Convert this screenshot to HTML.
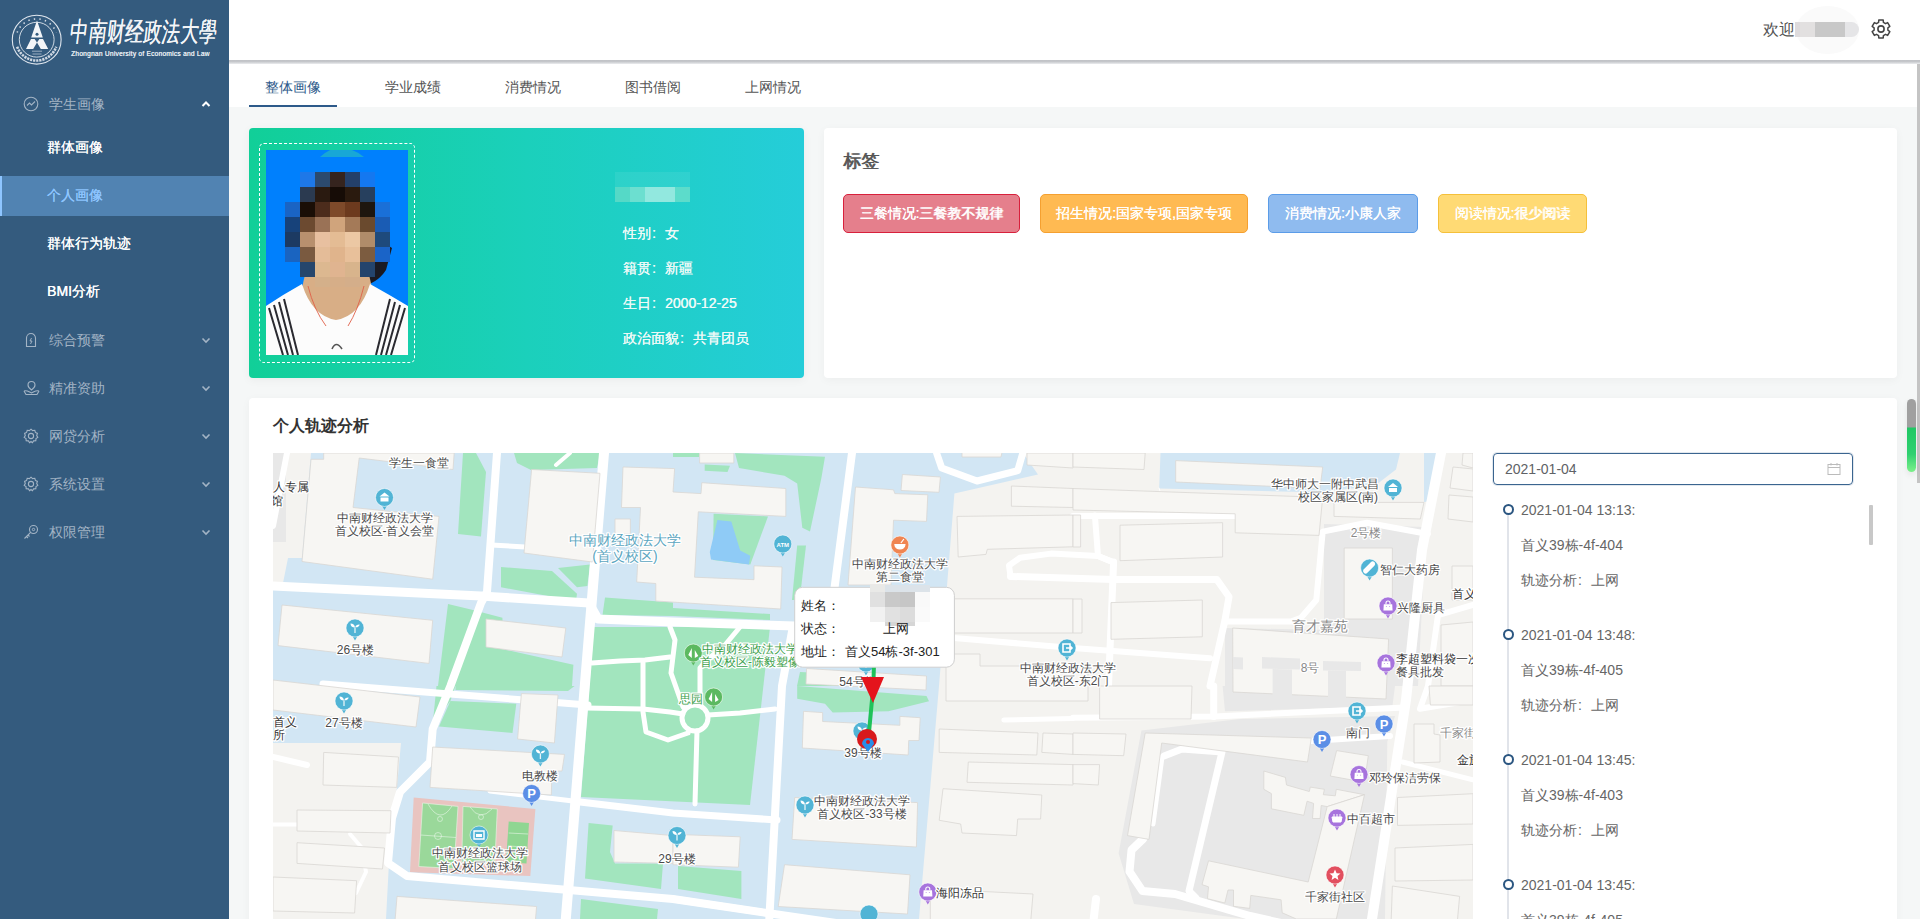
<!DOCTYPE html>
<html><head><meta charset="utf-8">
<style>
*{margin:0;padding:0;box-sizing:border-box}
html,body{width:1920px;height:919px;overflow:hidden;background:#f5f7f7;font-family:"Liberation Sans",sans-serif;}
.abs{position:absolute}
#side{position:absolute;left:0;top:0;width:229px;height:919px;background:#345b7e}
.mi{position:absolute;left:0;width:229px;height:40px;font-size:14px;line-height:40px;color:#a3b4c5}
.mi .t{position:absolute;left:49px;top:0}
.mi .ch{position:absolute;left:201px;top:16px}
.mi .ic{position:absolute;left:23px;top:12px}
.sub{position:absolute;left:47px;font-size:14px;color:#fff;line-height:20px;text-shadow:0.35px 0 0 currentColor}
#hdr{position:absolute;left:229px;top:0;width:1691px;height:60px;background:#fff;}
#tabs{position:absolute;left:229px;top:64px;width:1688px;height:43px;background:#fff}
.tab{position:absolute;top:13px;font-size:14px;color:#555;line-height:20px}
.card{position:absolute;background:#fff;border-radius:4px}
.ptxt{position:absolute;left:623px;font-size:14px;color:#eefaf8;line-height:20px;white-space:nowrap;margin-top:1px;text-shadow:0.3px 0 0 currentColor}
.tag{position:absolute;top:194px;height:39px;border-radius:5px;border:1px solid;color:#fff;font-size:14px;line-height:37px;text-align:center;white-space:nowrap;text-shadow:0.3px 0 0 #fff}
.tl{position:absolute;left:1521px;font-size:14px;color:#666;line-height:20px;white-space:nowrap}
.cl{display:inline-block;width:14px;padding-left:1px;text-align:left}
.dot{position:absolute;left:1503px;width:11px;height:11px;border-radius:50%;border:2px solid #2b5681;background:#fff}
</style></head>
<body>
<div id="side">
  <svg class="abs" style="left:0;top:0" width="229" height="70" viewBox="0 0 229 70">
    <circle cx="36.7" cy="39.7" r="24.4" fill="none" stroke="#dfe6ee" stroke-width="1.1"/>
    <circle cx="36.7" cy="39.7" r="17.4" fill="none" stroke="#dfe6ee" stroke-width="0.9"/>
    <path d="M37 20.5 L42.8 37.6 L31.2 37.6 Z M31 39.1 L34.6 39.1 L37 42.6 L33.2 48.9 L26 48.9 Z M39.4 39.1 L43 39.1 L48.2 48.9 L40.8 48.9 L37 42.6 Z" fill="#f2f5f8"/>
    <circle cx="37" cy="34.3" r="1.5" fill="#345b7e"/>
    <path d="M17.15 46.8 A20.8 20.8 0 0 0 56.25 46.8" fill="none" stroke="#d0d9e3" stroke-width="2.6" stroke-dasharray="2.2 0.9"/>
    <path d="M17.15 32.6 A20.8 20.8 0 0 1 56.25 32.6" fill="none" stroke="#d5dde6" stroke-width="1.6" stroke-dasharray="1.4 4.2"/>
    <path d="M32 51.2 H42 M32.5 54 H41.5" stroke="#c9d3de" stroke-width="0.7"/>
  </svg>
  <div class="abs" style="left:72px;top:17px;font-family:'Liberation Serif',serif;font-size:18px;line-height:20px;color:#f4f6f8;letter-spacing:0.4px;white-space:nowrap;transform:scale(1.0,1.5) skewX(-10deg);transform-origin:0 0;text-shadow:0.3px 0 0 #f4f6f8">中南财经政法大學</div>
  <div class="abs" style="left:71px;top:50px;font-size:6.6px;color:#e6ecf2;white-space:nowrap;letter-spacing:0.25px;text-shadow:0.2px 0 0 #e6ecf2">Zhongnan University of Economics and Law</div>

  <div class="mi" style="top:84px"><svg class="ic" width="16" height="16" viewBox="0 0 16 16"><circle cx="8" cy="8" r="6.8" fill="none" stroke="#a3b4c5" stroke-width="1.1"/><path d="M4 9.5 L6.5 7 L8.5 9 L12 5.5" fill="none" stroke="#a3b4c5" stroke-width="1.1"/></svg><span class="t">学生画像</span>
    <svg class="ch" width="10" height="8" viewBox="0 0 10 8"><path d="M1.5 6 L5 2.5 L8.5 6" fill="none" stroke="#fff" stroke-width="2"/></svg></div>
  <div class="sub" style="top:137px">群体画像</div>
  <div class="abs" style="left:0;top:176px;width:229px;height:40px;background:#5183b2;border-left:2px solid #8ec5ff"></div>
  <div class="sub" style="top:185px;color:#8ec5ff">个人画像</div>
  <div class="sub" style="top:233px">群体行为轨迹</div>
  <div class="sub" style="top:281px">BMI分析</div>

  <div class="mi" style="top:320px"><svg class="ic" width="16" height="16" viewBox="0 0 16 16"><path d="M3.5 14.5 V6 A4.5 4.5 0 0 1 12.5 6 V14.5 Z" fill="none" stroke="#a3b4c5" stroke-width="1.1"/><path d="M8.5 6 L7 9 H9 L7.5 12" fill="none" stroke="#a3b4c5" stroke-width="1"/></svg><span class="t">综合预警</span>
    <svg class="ch" width="10" height="8" viewBox="0 0 10 8"><path d="M1.5 2.5 L5 6 L8.5 2.5" fill="none" stroke="#a3b4c5" stroke-width="1.6"/></svg></div>
  <div class="mi" style="top:368px"><svg class="ic" width="17" height="16" viewBox="0 0 17 16"><path d="M8.5 1.5 C6 1.5 5 3.5 5 5 C5 7.5 8.5 10 8.5 10 C8.5 10 12 7.5 12 5 C12 3.5 11 1.5 8.5 1.5 Z" fill="none" stroke="#a3b4c5" stroke-width="1.1"/><path d="M1 11 C4 10 6 12 8.5 13 C11 12 13 10 16 11 M1 11 L3 14.5 H14 L16 11" fill="none" stroke="#a3b4c5" stroke-width="1.1"/></svg><span class="t">精准资助</span>
    <svg class="ch" width="10" height="8" viewBox="0 0 10 8"><path d="M1.5 2.5 L5 6 L8.5 2.5" fill="none" stroke="#a3b4c5" stroke-width="1.6"/></svg></div>
  <div class="mi" style="top:416px"><svg class="ic" width="16" height="16" viewBox="0 0 16 16"><path d="M8 1.2 L9.6 2.6 L11.8 2.3 L12.4 4.4 L14.4 5.4 L13.7 7.5 L14.8 9.4 L13 10.6 L12.8 12.8 L10.6 12.9 L9.4 14.7 L8 13.5 L6.6 14.7 L5.4 12.9 L3.2 12.8 L3 10.6 L1.2 9.4 L2.3 7.5 L1.6 5.4 L3.6 4.4 L4.2 2.3 L6.4 2.6 Z" fill="none" stroke="#a3b4c5" stroke-width="1.1"/><circle cx="8" cy="8" r="2.6" fill="none" stroke="#a3b4c5" stroke-width="1.1"/></svg><span class="t">网贷分析</span>
    <svg class="ch" width="10" height="8" viewBox="0 0 10 8"><path d="M1.5 2.5 L5 6 L8.5 2.5" fill="none" stroke="#a3b4c5" stroke-width="1.6"/></svg></div>
  <div class="mi" style="top:464px"><svg class="ic" width="16" height="16" viewBox="0 0 16 16"><path d="M8 1.2 L9.6 2.6 L11.8 2.3 L12.4 4.4 L14.4 5.4 L13.7 7.5 L14.8 9.4 L13 10.6 L12.8 12.8 L10.6 12.9 L9.4 14.7 L8 13.5 L6.6 14.7 L5.4 12.9 L3.2 12.8 L3 10.6 L1.2 9.4 L2.3 7.5 L1.6 5.4 L3.6 4.4 L4.2 2.3 L6.4 2.6 Z" fill="none" stroke="#a3b4c5" stroke-width="1.1"/><circle cx="8" cy="8" r="2.6" fill="none" stroke="#a3b4c5" stroke-width="1.1"/></svg><span class="t">系统设置</span>
    <svg class="ch" width="10" height="8" viewBox="0 0 10 8"><path d="M1.5 2.5 L5 6 L8.5 2.5" fill="none" stroke="#a3b4c5" stroke-width="1.6"/></svg></div>
  <div class="mi" style="top:512px"><svg class="ic" width="16" height="16" viewBox="0 0 16 16"><circle cx="10.5" cy="5.5" r="4" fill="none" stroke="#a3b4c5" stroke-width="1.1"/><circle cx="10.5" cy="5.5" r="1.2" fill="none" stroke="#a3b4c5" stroke-width="1"/><path d="M7.6 8.4 L1.5 14.5 M3.5 12.5 L5 14 M5 11 L6.5 12.5" fill="none" stroke="#a3b4c5" stroke-width="1.1"/></svg><span class="t">权限管理</span>
    <svg class="ch" width="10" height="8" viewBox="0 0 10 8"><path d="M1.5 2.5 L5 6 L8.5 2.5" fill="none" stroke="#a3b4c5" stroke-width="1.6"/></svg></div>
</div>

<div id="hdr">
  <div class="abs" style="left:1534px;top:19px;font-size:16px;line-height:22px;color:#555">欢迎</div>
  <div class="abs" style="left:1567px;top:6px;width:63px;height:48px;border-radius:50%;background:#fafafa"></div><div class="abs" style="left:1566px;top:22px;width:64px;height:15px;border-radius:0 8px 8px 0;background:linear-gradient(90deg,#dedbdd 0,#dedbdd 5px,#e2e0e0 5px,#e2e0e0 20px,#c8c8c8 20px,#c8c8c8 50px,#e5e5e7 50px)"></div>
  <svg class="abs" style="left:1642px;top:19px" width="20" height="20" viewBox="0 0 20 20"><path d="M7.61 3.42 L7.77 1.07 L12.23 1.07 L12.39 3.42 L14.50 4.64 L16.62 3.61 L18.84 7.46 L16.89 8.78 L16.89 11.22 L18.84 12.54 L16.62 16.39 L14.50 15.36 L12.39 16.58 L12.23 18.93 L7.77 18.93 L7.61 16.58 L5.50 15.36 L3.38 16.39 L1.16 12.54 L3.11 11.22 L3.11 8.78 L1.16 7.46 L3.38 3.61 L5.50 4.64 Z" fill="none" stroke="#444" stroke-width="1.5" stroke-linejoin="round"/><circle cx="10" cy="10" r="3.1" fill="none" stroke="#444" stroke-width="1.6"/></svg>
</div>
<div class="abs" style="left:1917px;top:64px;width:3px;height:419px;background:#c4c4c4"></div>
<div class="abs" style="left:229px;top:60px;width:1691px;height:4px;background:linear-gradient(180deg,#c2c4c8 0%,#c0c2c6 30%,#dcdee1 80%,#eeeff1 100%)"></div>
<div id="tabs">
  <div class="tab" style="left:36px;color:#2d5a8a">整体画像</div>
  <div class="abs" style="left:20px;top:41px;width:88px;height:2px;background:#2d5a8a"></div>
  <div class="tab" style="left:156px">学业成绩</div>
  <div class="tab" style="left:276px">消费情况</div>
  <div class="tab" style="left:396px">图书借阅</div>
  <div class="tab" style="left:516px">上网情况</div>
</div>

<!-- profile card -->
<div class="abs" style="left:249px;top:128px;width:555px;height:250px;border-radius:4px;background:linear-gradient(90deg,#11cf98 0%,#1bd0bb 50%,#25cdd9 100%);box-shadow:0 2px 10px rgba(0,0,0,.05)"></div>
<div class="abs" style="left:259px;top:143px;width:156px;height:220px;border:1px dashed #fff;border-radius:5px"></div>
<svg class="abs" style="left:266px;top:150px" width="142" height="205" viewBox="0 0 142 205">
  <rect width="142" height="205" fill="#0080fd"/>
  <path d="M54 7 Q66 -4 78 -2 Q90 0 98 7 Z" fill="#18a7d6"/>
  <path d="M92 113 Q118 90 126 98 L120 120 Q110 135 95 135 Z" fill="#1a1a22"/>
  <path d="M40 120 L102 120 L106 138 Q96 172 70 176 Q44 172 36 138 Z" fill="#d8ae86"/>
  <path d="M0 205 V156 Q18 144 36 134 Q46 166 70 170 Q94 166 104 134 Q122 144 142 156 V205 Z" fill="#fcfcfc"/>
  <path d="M42 136 Q48 160 60 176 M98 136 Q92 160 82 176" fill="none" stroke="#e06048" stroke-width="0.9"/>
  <path d="M3 158 L17 205 M8 155 L22 205 M13 152 L27 205 M18 149 L32 205" stroke="#2a2a30" stroke-width="2"/>
  <path d="M139 158 L125 205 M134 155 L120 205 M129 152 L115 205 M124 149 L110 205" stroke="#2a2a30" stroke-width="2"/>
  <path d="M66 199 Q70 190 76 199" fill="none" stroke="#555" stroke-width="1.6"/>
  <rect x="34" y="22" width="15" height="15" fill="#1e78e8"/><rect x="49" y="22" width="15" height="15" fill="#2c4a6e"/><rect x="64" y="22" width="15" height="15" fill="#35241e"/><rect x="79" y="22" width="15" height="15" fill="#24406a"/><rect x="94" y="22" width="15" height="15" fill="#1478f0"/>
  <rect x="34" y="37" width="15" height="15" fill="#2b3a50"/><rect x="49" y="37" width="15" height="15" fill="#2a1a10"/><rect x="64" y="37" width="15" height="15" fill="#160c06"/><rect x="79" y="37" width="15" height="15" fill="#2a1a0e"/><rect x="94" y="37" width="15" height="15" fill="#27405e"/>
  <rect x="19" y="52" width="15" height="15" fill="#1a64c4"/><rect x="34" y="52" width="15" height="15" fill="#1a0e06"/><rect x="49" y="52" width="15" height="15" fill="#4c2c1c"/><rect x="64" y="52" width="15" height="15" fill="#7e4a2a"/><rect x="79" y="52" width="15" height="15" fill="#6c3a1e"/><rect x="94" y="52" width="15" height="15" fill="#1e160e"/><rect x="109" y="52" width="15" height="15" fill="#1a70d8"/>
  <rect x="19" y="67" width="15" height="15" fill="#17427a"/><rect x="34" y="67" width="15" height="15" fill="#6c4a30"/><rect x="49" y="67" width="15" height="15" fill="#9a7256"/><rect x="64" y="67" width="15" height="15" fill="#d0a47c"/><rect x="79" y="67" width="15" height="15" fill="#a47a58"/><rect x="94" y="67" width="15" height="15" fill="#6a4a2e"/><rect x="109" y="67" width="15" height="15" fill="#1a5cb4"/>
  <rect x="19" y="82" width="15" height="15" fill="#1c3a62"/><rect x="34" y="82" width="15" height="15" fill="#b8906e"/><rect x="49" y="82" width="15" height="15" fill="#e8c0a0"/><rect x="64" y="82" width="15" height="15" fill="#e4bc94"/><rect x="79" y="82" width="15" height="15" fill="#ecc8a4"/><rect x="94" y="82" width="15" height="15" fill="#b08c6a"/><rect x="109" y="82" width="15" height="15" fill="#1e4a7c"/>
  <rect x="19" y="97" width="15" height="15" fill="#1a64c0"/><rect x="34" y="97" width="15" height="15" fill="#7a5a40"/><rect x="49" y="97" width="15" height="15" fill="#e4bc98"/><rect x="64" y="97" width="15" height="15" fill="#e0b48c"/><rect x="79" y="97" width="15" height="15" fill="#e8c09a"/><rect x="94" y="97" width="15" height="15" fill="#7c5c40"/><rect x="109" y="97" width="15" height="15" fill="#1a64c8"/>
  <rect x="34" y="112" width="15" height="15" fill="#26466c"/><rect x="49" y="112" width="15" height="15" fill="#dcb890"/><rect x="64" y="112" width="15" height="15" fill="#e0b490"/><rect x="79" y="112" width="15" height="15" fill="#d8b48c"/><rect x="94" y="112" width="15" height="15" fill="#24446c"/>
  <rect x="49" y="127" width="15" height="10" fill="#d4b08a"/><rect x="64" y="127" width="15" height="10" fill="#d6ae88"/><rect x="79" y="127" width="15" height="10" fill="#d4ae8a"/>
</svg>
<svg class="abs" style="left:615px;top:172px" width="75" height="30"><rect x="0" y="0" width="75" height="15" fill="#ffffff" fill-opacity="0.07"/><rect x="0" y="15" width="15" height="15" fill="#55d9c7"/><rect x="15" y="15" width="15" height="15" fill="#6cdfd0"/><rect x="30" y="15" width="30" height="15" fill="#92e8df"/><rect x="60" y="15" width="15" height="15" fill="#5cdccb"/></svg>
<div class="ptxt" style="top:222px">性别<span class="cl">:</span>女</div>
<div class="ptxt" style="top:257px">籍贯<span class="cl">:</span>新疆</div>
<div class="ptxt" style="top:292px">生日<span class="cl">:</span>2000-12-25</div>
<div class="ptxt" style="top:327px">政治面貌<span class="cl">:</span>共青团员</div>

<!-- tags card -->
<div class="card" style="left:824px;top:128px;width:1073px;height:250px;box-shadow:0 2px 10px rgba(0,0,0,.04)"></div>
<div class="abs" style="left:843px;top:149px;font-size:18px;line-height:24px;color:#555;text-shadow:0.5px 0 0 #555">标签</div>
<div class="tag" style="left:843px;width:177px;background:#e57f8c;border-color:#d8203c">三餐情况:三餐教不规律</div>
<div class="tag" style="left:1040px;width:208px;background:#ffba52;border-color:#f5a030">招生情况:国家专项,国家专项</div>
<div class="tag" style="left:1268px;width:150px;background:#8fbbef;border-color:#5b9ce8">消费情况:小康人家</div>
<div class="tag" style="left:1438px;width:149px;background:#ffda74;border-color:#f5c03a">阅读情况:很少阅读</div>

<!-- trajectory card -->
<div class="card" style="left:249px;top:398px;width:1648px;height:540px;box-shadow:0 2px 10px rgba(0,0,0,.04)"></div>
<div class="abs" style="left:273px;top:415px;font-size:16px;line-height:22px;color:#333;font-weight:bold">个人轨迹分析</div>
<div class="abs" style="left:1493px;top:453px;width:360px;height:32px;border:1px solid #3b6590;border-radius:4px;box-shadow:0 0 0 1px rgba(59,101,144,.15)"></div>
<div class="abs" style="left:1505px;top:459px;font-size:14px;line-height:20px;color:#606266">2021-01-04</div>
<svg class="abs" style="left:1827px;top:462px" width="14" height="14" viewBox="0 0 14 14"><rect x="1" y="2.5" width="12" height="10" fill="none" stroke="#bbb" stroke-width="1"/><path d="M1 5.5 H13 M4 1 V3.5 M10 1 V3.5" stroke="#bbb" stroke-width="1"/></svg>
<div class="abs" style="left:1507px;top:515px;width:2px;height:404px;background:#e1e4ea"></div>
<div class="abs" style="left:1869px;top:505px;width:4px;height:40px;background:#c8c8c8;border-radius:1px"></div>
<div class="dot" style="top:504px"></div>
<div class="tl" style="top:500px">2021-01-04 13:13:</div>
<div class="tl" style="top:535px">首义39栋-4f-404</div>
<div class="tl" style="top:570px">轨迹分析<span class="cl">:</span>上网</div>
<div class="dot" style="top:629px"></div>
<div class="tl" style="top:625px">2021-01-04 13:48:</div>
<div class="tl" style="top:660px">首义39栋-4f-405</div>
<div class="tl" style="top:695px">轨迹分析<span class="cl">:</span>上网</div>
<div class="dot" style="top:754px"></div>
<div class="tl" style="top:750px">2021-01-04 13:45:</div>
<div class="tl" style="top:785px">首义39栋-4f-403</div>
<div class="tl" style="top:820px">轨迹分析<span class="cl">:</span>上网</div>
<div class="dot" style="top:879px"></div>
<div class="tl" style="top:875px">2021-01-04 13:45:</div>
<div class="tl" style="top:910px">首义39栋-4f-405</div>

<!-- page scrollbar thumb -->
<div class="abs" style="left:1907px;top:399px;width:9px;height:73px;border-radius:5px;background:linear-gradient(180deg,#a0a0a0 0,#a0a0a0 28px,#1fc864 29px,#2fd070 55px,#7cf08a 73px);box-shadow:0 3px 6px rgba(0,0,0,.08)"></div>

<svg class="abs" style="left:273px;top:453px" width="1200" height="466" viewBox="273 453 1200 466" font-family="Liberation Sans, sans-serif">
<clipPath id="mc"><rect x="273" y="453" width="1200" height="466"/></clipPath><g clip-path="url(#mc)">
<rect x="273" y="453" width="1200" height="466" fill="#f4f3f0"/>
<polygon points="273.0,453.0 286.0,453.0 286.0,542.0 273.0,542.0" fill="#e8e8e8"/>
<polygon points="311.0,453.0 1023.0,453.0 1038.0,474.5 954.4,493.6 939.0,686.0 919.0,919.0 386.0,919.0 390.0,843.0 397.0,787.0 401.0,743.0 273.0,743.0 273.0,590.0 283.0,583.0 288.0,558.0 302.0,558.0" fill="#d2e6f4"/>
<polygon points="1160.5,453.0 1400.0,453.0 1396.0,469.5 1374.6,486.0 1316.3,492.3 1159.2,488.5" fill="#d2e6f4"/>
<polygon points="1424.0,453.0 1442.0,453.0 1433.0,501.0 1424.0,502.0" fill="#d2e6f4"/>
<polygon points="1324.0,524.0 1426.0,527.0 1418.0,686.0 1324.0,686.0" fill="#e8e8e8"/>
<polygon points="1225.0,628.0 1330.0,630.0 1330.0,686.0 1225.0,686.0" fill="#e8e8e8"/>
<polygon points="1222.6,686.0 1395.0,686.0 1392.4,706.3 1225.0,711.3" fill="#e8e8e8"/>
<polygon points="1141.4,730.4 1240.0,719.0 1395.0,716.0 1387.3,741.8 1385.0,919.0 1245.4,919.0 1134.0,904.0 1118.6,853.3" fill="#e8e8e8"/>
<polygon points="463.0,453.0 476.0,453.0 486.0,472.0 481.0,536.6 458.0,534.0" fill="#a2e5be"/>
<polygon points="514.0,453.0 600.0,453.0 597.0,468.0 531.0,470.0 517.0,463.0" fill="#a2e5be"/>
<polygon points="501.0,567.0 552.0,571.0 577.0,593.7 576.0,601.3 501.0,587.3" fill="#a2e5be"/>
<polygon points="558.0,568.0 590.0,564.5 587.4,586.0 577.0,587.3" fill="#a2e5be"/>
<polygon points="448.0,604.0 473.0,610.0 502.4,617.8 503.7,649.4 573.4,664.7 572.0,686.0 438.0,686.0" fill="#a2e5be"/>
<polygon points="605.0,597.5 673.0,602.6 673.0,616.0 602.5,615.0" fill="#a2e5be"/>
<polygon points="673.0,453.0 699.0,453.0 699.0,457.0 673.0,457.0" fill="#a2e5be"/>
<polygon points="735.0,453.0 825.0,456.8 821.3,478.4 810.0,531.6 802.3,527.8 797.2,483.4 784.5,475.8 739.0,468.0" fill="#a2e5be"/>
<polygon points="704.7,464.4 730.0,465.7 727.5,472.0 704.7,470.7" fill="#a2e5be"/>
<polygon points="797.2,545.5 806.0,545.5 799.7,600.0 792.0,600.0" fill="#a2e5be"/>
<polygon points="673.0,608.0 770.0,614.0 770.0,620.0 673.0,616.0" fill="#a2e5be"/>
<polygon points="594.0,627.0 770.0,627.0 750.0,805.0 581.0,797.0" fill="#a2e5be"/>
<polygon points="436.5,686.0 455.5,686.0 450.4,701.0 432.7,724.0" fill="#a2e5be"/>
<polygon points="455.5,686.0 574.6,686.0 568.0,691.0 455.5,690.0" fill="#a2e5be"/>
<polygon points="450.4,701.0 516.3,703.7 512.5,733.0 439.0,726.6" fill="#a2e5be"/>
<polygon points="588.6,823.0 612.7,825.4 610.0,852.0 615.0,863.4 663.0,863.4 661.0,889.0 585.0,878.6" fill="#a2e5be"/>
<polygon points="581.0,899.0 658.0,909.0 657.0,919.0 580.0,919.0" fill="#a2e5be"/>
<polygon points="678.0,866.0 741.4,871.0 741.4,899.0 678.0,889.0" fill="#a2e5be"/>
<polygon points="797.2,686.0 926.5,696.0 929.0,701.2 888.5,711.3 832.7,712.6 825.0,703.7 797.2,698.7" fill="#a2e5be"/>
<polygon points="800.0,672.0 880.0,676.0 880.0,686.0 797.0,686.0" fill="#a2e5be"/>
<polygon points="713.6,513.8 768.0,516.4 750.3,564.5 713.0,560.0" fill="#a2e5be"/>
<polygon points="717.4,520.0 731.3,521.4 740.2,550.6 750.3,555.7 749.0,564.5 711.0,559.5 709.8,552.0" fill="#8fcbf6"/>
<polygon points="413.7,797.5 535.4,809.0 530.3,876.0 410.0,872.3" fill="#e9c4c0"/>
<polygon points="422.6,803.0 458.0,806.4 454.0,868.5 418.8,866.5" fill="#9ad89a"/>
<polygon points="463.0,806.4 497.3,809.0 494.8,863.4 461.8,862.0" fill="#9ad89a"/>
<polygon points="508.7,821.6 529.0,823.0 526.5,863.4 506.0,862.0" fill="#8fd692"/>
<g fill="none" stroke="#e8f6e8" stroke-width="0.6"><path d="M422.6,803 L458,806.4 L454,868.5 L418.8,866.5 Z M463,806.4 L497.3,809 L494.8,863.4 L461.8,862 Z M420.5,835 L456,837.5"/><circle cx="438" cy="836" r="3.5"/><path d="M428,804 Q440,825 452,806"/><circle cx="440" cy="819" r="2.5"/><path d="M470,807 Q480,822 492,809"/><circle cx="481" cy="817" r="2.5"/><path d="M508.7,833 L528,834 M508,846 L527,847"/></g>
<polyline points="287.0,453.0 273.0,526.0" fill="none" stroke="#ffffff" stroke-width="6" stroke-linejoin="round" stroke-linecap="round"/>
<polyline points="491.0,545.0 525.0,547.0" fill="none" stroke="#ffffff" stroke-width="5" stroke-linejoin="round" stroke-linecap="round"/>
<polyline points="490.0,791.0 573.0,801.0" fill="none" stroke="#ffffff" stroke-width="5" stroke-linejoin="round" stroke-linecap="round"/>
<polyline points="273.0,757.0 307.0,765.0" fill="none" stroke="#ffffff" stroke-width="6" stroke-linejoin="round" stroke-linecap="round"/>
<polyline points="273.0,824.5 297.0,824.5" fill="none" stroke="#ffffff" stroke-width="4" stroke-linejoin="round" stroke-linecap="round"/>
<polyline points="350.0,834.0 362.0,848.0 366.0,872.0 356.0,893.0" fill="none" stroke="#ffffff" stroke-width="4" stroke-linejoin="round" stroke-linecap="round"/>
<polyline points="556.0,465.0 570.0,453.0" fill="none" stroke="#ffffff" stroke-width="4" stroke-linejoin="round" stroke-linecap="round"/>
<polyline points="273.0,586.0 481.0,596.0 589.0,603.0 598.0,619.0 673.0,622.0 795.0,626.0" fill="none" stroke="#ffffff" stroke-width="9" stroke-linejoin="round" stroke-linecap="round"/>
<polyline points="497.0,453.0 487.0,592.0 481.0,603.0 450.4,686.0 432.7,729.0 430.0,762.0 400.0,792.0 392.0,818.0 388.0,863.0 407.0,876.0 673.0,899.0 774.0,914.0 850.0,925.0" fill="none" stroke="#ffffff" stroke-width="8" stroke-linejoin="round" stroke-linecap="round"/>
<polyline points="604.0,453.0 584.8,686.0 565.8,919.0" fill="none" stroke="#ffffff" stroke-width="10" stroke-linejoin="round" stroke-linecap="round"/>
<polyline points="323.0,684.0 588.0,705.0" fill="none" stroke="#ffffff" stroke-width="7" stroke-linejoin="round" stroke-linecap="round"/>
<polyline points="852.0,453.0 831.0,615.0" fill="none" stroke="#ffffff" stroke-width="8" stroke-linejoin="round" stroke-linecap="round"/>
<polyline points="793.0,626.0 782.0,686.0 769.3,919.0" fill="none" stroke="#ffffff" stroke-width="8" stroke-linejoin="round" stroke-linecap="round"/>
<polyline points="580.0,802.0 673.0,813.0 777.0,820.0" fill="none" stroke="#ffffff" stroke-width="7" stroke-linejoin="round" stroke-linecap="round"/>
<polyline points="673.0,899.0 774.0,914.0" fill="none" stroke="#ffffff" stroke-width="7" stroke-linejoin="round" stroke-linecap="round"/>
<polyline points="592.0,663.0 620.0,661.0 645.0,660.0 670.0,657.0" fill="none" stroke="#ffffff" stroke-width="5" stroke-linejoin="round" stroke-linecap="round"/>
<polyline points="585.0,708.0 643.0,709.0 670.0,712.0 683.0,714.0" fill="none" stroke="#ffffff" stroke-width="5" stroke-linejoin="round" stroke-linecap="round"/>
<polyline points="643.0,663.0 643.0,712.0 646.0,732.0 668.0,740.0 688.0,733.0" fill="none" stroke="#ffffff" stroke-width="5" stroke-linejoin="round" stroke-linecap="round"/>
<circle cx="695" cy="718" r="13" fill="none" stroke="#fff" stroke-width="5"/>
<polyline points="697.0,731.0 695.0,804.0" fill="none" stroke="#ffffff" stroke-width="5" stroke-linejoin="round" stroke-linecap="round"/>
<polyline points="708.0,715.0 740.0,713.0 775.0,709.0" fill="none" stroke="#ffffff" stroke-width="5" stroke-linejoin="round" stroke-linecap="round"/>
<polyline points="700.0,705.0 700.0,668.0 706.0,661.0 725.0,645.0 740.0,627.0" fill="none" stroke="#ffffff" stroke-width="5" stroke-linejoin="round" stroke-linecap="round"/>
<polyline points="683.0,707.0 671.0,673.0 675.0,640.0 670.0,627.0" fill="none" stroke="#ffffff" stroke-width="5" stroke-linejoin="round" stroke-linecap="round"/>
<polyline points="936.6,453.0 941.7,468.0 977.0,481.0 1017.7,470.7 1022.8,453.0" fill="none" stroke="#ffffff" stroke-width="7" stroke-linejoin="round" stroke-linecap="round"/>
<polyline points="954.0,638.0 1073.0,648.0 1210.0,658.3" fill="none" stroke="#ffffff" stroke-width="6" stroke-linejoin="round" stroke-linecap="round"/>
<polyline points="1003.8,720.0 1073.0,718.5" fill="none" stroke="#ffffff" stroke-width="5" stroke-linejoin="round" stroke-linecap="round"/>
<polyline points="1073.0,516.0 1235.0,516.0" fill="none" stroke="#ffffff" stroke-width="6" stroke-linejoin="round" stroke-linecap="round"/>
<polyline points="1094.9,515.5 1098.0,556.0 1113.6,562.4" fill="none" stroke="#ffffff" stroke-width="6" stroke-linejoin="round" stroke-linecap="round"/>
<polyline points="1010.5,576.4 1113.6,579.6 1216.8,579.6 1229.0,596.8 1225.0,620.0 1210.0,686.0" fill="none" stroke="#ffffff" stroke-width="7" stroke-linejoin="round" stroke-linecap="round"/>
<polyline points="1010.5,576.4 1009.0,565.5 1020.0,557.7 1051.0,553.6 1098.0,556.0 1113.6,562.4" fill="none" stroke="#ffffff" stroke-width="6" stroke-linejoin="round" stroke-linecap="round"/>
<polyline points="1113.6,562.0 1108.5,686.0" fill="none" stroke="#ffffff" stroke-width="7" stroke-linejoin="round" stroke-linecap="round"/>
<polyline points="1225.0,621.6 1291.0,621.6 1301.0,617.8 1316.3,600.0 1322.7,531.6 1367.0,522.7 1428.0,534.0" fill="none" stroke="#ffffff" stroke-width="6" stroke-linejoin="round" stroke-linecap="round"/>
<polyline points="1441.0,453.0 1422.0,550.0 1406.0,700.0 1372.0,919.0" fill="none" stroke="#ffffff" stroke-width="10" stroke-linejoin="round" stroke-linecap="round"/>
<polyline points="1473.0,605.0 1438.0,615.2 1428.0,686.0 1420.0,708.8 1473.0,700.0" fill="none" stroke="#ffffff" stroke-width="6" stroke-linejoin="round" stroke-linecap="round"/>
<polyline points="1402.5,762.0 1473.0,779.8" fill="none" stroke="#ffffff" stroke-width="5" stroke-linejoin="round" stroke-linecap="round"/>
<polyline points="1073.0,717.7 1215.0,716.4 1405.0,707.5" fill="none" stroke="#ffffff" stroke-width="6" stroke-linejoin="round" stroke-linecap="round"/>
<polyline points="1213.7,686.0 1213.7,716.4" fill="none" stroke="#ffffff" stroke-width="7" stroke-linejoin="round" stroke-linecap="round"/>
<polyline points="1310.0,741.0 1390.0,736.0" fill="none" stroke="#ffffff" stroke-width="6" stroke-linejoin="round" stroke-linecap="round"/>
<polyline points="1164.0,756.0 1182.0,749.0 1222.0,752.0 1189.0,891.0 1196.0,898.0" fill="none" stroke="#ffffff" stroke-width="7" stroke-linejoin="round" stroke-linecap="round"/>
<polyline points="1162.0,757.0 1153.0,824.0" fill="none" stroke="#ffffff" stroke-width="5" stroke-linejoin="round" stroke-linecap="round"/>
<polyline points="1143.0,839.0 1131.5,850.0 1129.5,871.6 1142.5,891.0 1175.0,894.0 1250.0,916.0 1290.0,925.0" fill="none" stroke="#ffffff" stroke-width="8" stroke-linejoin="round" stroke-linecap="round"/>
<polyline points="1096.0,899.0 1093.0,925.0" fill="none" stroke="#ffffff" stroke-width="8" stroke-linejoin="round" stroke-linecap="round"/>
<polyline points="1161.0,494.0 1159.0,488.0" fill="none" stroke="#ffffff" stroke-width="1" stroke-linejoin="round" stroke-linecap="round"/>
<polygon points="311.0,459.3 323.7,459.3 323.7,453.0 454.2,453.0 453.0,469.5 359.2,458.0 353.0,507.5 439.0,516.4 432.7,579.2 302.0,561.5" fill="#f7f6f3" stroke="#d9d7d3" stroke-width="0.8"/>
<polygon points="531.6,469.5 600.0,473.3 592.4,562.0 524.0,553.0" fill="#f7f6f3" stroke="#d9d7d3" stroke-width="0.8"/>
<polygon points="282.0,605.0 432.7,620.3 429.0,663.4 278.0,645.6" fill="#f7f6f3" stroke="#d9d7d3" stroke-width="0.8"/>
<polygon points="486.0,619.0 565.8,628.0 562.0,657.0 486.0,647.0" fill="#f7f6f3" stroke="#d9d7d3" stroke-width="0.8"/>
<polygon points="615.0,519.0 630.4,519.0 630.4,534.0 615.0,534.0" fill="#f7f6f3" stroke="#d9d7d3" stroke-width="0.8"/>
<polygon points="623.0,467.0 674.6,468.6 673.0,492.0 701.0,493.6 701.8,482.7 785.8,488.5 785.8,516.4 698.3,511.8 694.5,577.2 754.0,579.7 754.0,565.8 782.0,567.0 780.7,609.0 655.8,601.0 655.8,583.5 636.7,582.0 640.5,507.5 621.5,507.5" fill="#f7f6f3" stroke="#d9d7d3" stroke-width="0.8"/>
<polygon points="273.0,680.0 420.0,697.0 416.0,727.0 273.0,710.0" fill="#f7f6f3" stroke="#d9d7d3" stroke-width="0.8"/>
<polygon points="323.7,752.4 398.5,757.0 396.7,787.4 323.0,785.0" fill="#f7f6f3" stroke="#d9d7d3" stroke-width="0.8"/>
<polygon points="297.0,810.0 391.0,810.7 390.0,833.0 297.0,831.0" fill="#f7f6f3" stroke="#d9d7d3" stroke-width="0.8"/>
<polygon points="297.0,842.7 384.5,848.0 382.5,869.0 297.0,863.4" fill="#f7f6f3" stroke="#d9d7d3" stroke-width="0.8"/>
<polygon points="273.0,877.0 356.6,880.7 354.6,913.0 273.0,911.0" fill="#f7f6f3" stroke="#d9d7d3" stroke-width="0.8"/>
<polygon points="432.7,747.0 564.5,754.4 562.0,771.0 552.0,771.0 551.3,795.0 430.0,787.4" fill="#f7f6f3" stroke="#d9d7d3" stroke-width="0.8"/>
<polygon points="521.4,693.6 558.0,695.0 554.4,743.0 517.6,739.0" fill="#f7f6f3" stroke="#d9d7d3" stroke-width="0.8"/>
<polygon points="614.0,830.5 673.0,835.6 673.0,863.4 614.0,862.0" fill="#f7f6f3" stroke="#d9d7d3" stroke-width="0.8"/>
<polygon points="397.0,896.4 536.6,906.5 535.0,925.0 394.7,925.0" fill="#f7f6f3" stroke="#d9d7d3" stroke-width="0.8"/>
<polygon points="699.6,453.0 733.8,453.0 733.8,463.0 699.6,463.0" fill="#f7f6f3" stroke="#d9d7d3" stroke-width="0.8"/>
<polygon points="855.5,487.0 893.5,489.8 894.8,493.6 927.8,494.8 926.5,521.4 893.5,520.2 891.0,585.0 848.0,585.0" fill="#f7f6f3" stroke="#d9d7d3" stroke-width="0.8"/>
<polygon points="902.4,474.5 940.4,477.0 939.0,492.3 901.0,490.5" fill="#f7f6f3" stroke="#d9d7d3" stroke-width="0.8"/>
<polygon points="962.0,450.0 1002.5,450.0 1001.0,457.0 962.0,457.0" fill="#f7f6f3" stroke="#d9d7d3" stroke-width="0.8"/>
<polygon points="1011.4,486.0 1073.0,488.5 1073.0,507.5 1011.4,506.2" fill="#f7f6f3" stroke="#d9d7d3" stroke-width="0.8"/>
<polygon points="957.0,516.4 1073.0,515.0 1073.0,546.8 987.3,549.3 986.0,554.4 958.2,557.0" fill="#f7f6f3" stroke="#d9d7d3" stroke-width="0.8"/>
<polygon points="954.4,598.8 1073.0,598.8 1073.0,633.0 954.4,633.0" fill="#f7f6f3" stroke="#d9d7d3" stroke-width="0.8"/>
<polygon points="806.6,668.5 926.5,676.0 926.0,690.0 806.0,684.0" fill="#f7f6f3" stroke="#d9d7d3" stroke-width="0.8"/>
<polygon points="1027.0,453.0 1073.0,453.0 1073.0,468.0 1027.0,465.0" fill="#f7f6f3" stroke="#d9d7d3" stroke-width="0.8"/>
<polygon points="946.0,654.0 980.0,654.0 980.0,666.0 1088.0,666.0 1088.0,701.0 946.0,701.0" fill="#f7f6f3" stroke="#d9d7d3" stroke-width="0.8"/>
<polygon points="803.5,711.3 822.6,712.6 822.6,721.5 899.9,725.3 899.9,716.4 920.2,717.7 919.0,740.5 908.7,740.5 908.2,755.0 802.3,748.0" fill="#f7f6f3" stroke="#d9d7d3" stroke-width="0.8"/>
<polygon points="794.7,797.5 917.6,802.6 916.4,847.0 792.0,839.4" fill="#f7f6f3" stroke="#d9d7d3" stroke-width="0.8"/>
<polygon points="784.5,864.7 910.0,874.8 907.5,914.0 778.2,906.5" fill="#f7f6f3" stroke="#d9d7d3" stroke-width="0.8"/>
<polygon points="673.0,834.3 740.2,836.8 738.4,867.2 673.0,864.7" fill="#f7f6f3" stroke="#d9d7d3" stroke-width="0.8"/>
<polygon points="939.2,729.0 1038.0,733.0 1036.8,755.0 939.2,752.4" fill="#f7f6f3" stroke="#d9d7d3" stroke-width="0.8"/>
<polygon points="1043.0,733.0 1073.0,734.0 1073.0,754.4 1041.8,752.4" fill="#f7f6f3" stroke="#d9d7d3" stroke-width="0.8"/>
<polygon points="968.3,762.0 1073.0,764.6 1073.0,785.0 967.0,782.3" fill="#f7f6f3" stroke="#d9d7d3" stroke-width="0.8"/>
<polygon points="943.0,788.7 1041.8,795.0 1040.6,819.0 1017.7,819.0 1016.5,835.6 962.0,833.0 960.7,824.0 939.2,820.3" fill="#f7f6f3" stroke="#d9d7d3" stroke-width="0.8"/>
<polygon points="930.3,888.8 1033.0,894.0 1030.4,925.0 930.3,925.0" fill="#f7f6f3" stroke="#d9d7d3" stroke-width="0.8"/>
<polygon points="1073.0,453.0 1145.2,453.0 1144.0,469.5 1073.0,467.0" fill="#f7f6f3" stroke="#d9d7d3" stroke-width="0.8"/>
<polygon points="1175.7,460.6 1322.7,467.0 1320.0,488.5 1175.7,482.0" fill="#f7f6f3" stroke="#d9d7d3" stroke-width="0.8"/>
<polygon points="1073.0,488.5 1322.7,497.4 1319.0,535.4 1235.2,532.8 1235.2,513.8 1073.0,510.0" fill="#f7f6f3" stroke="#d9d7d3" stroke-width="0.8"/>
<polygon points="1334.0,502.4 1424.0,502.4 1420.3,519.0 1334.0,516.4" fill="#f7f6f3" stroke="#d9d7d3" stroke-width="0.8"/>
<polygon points="1463.0,453.0 1473.0,453.0 1473.0,468.0 1462.0,465.0" fill="#f7f6f3" stroke="#d9d7d3" stroke-width="0.8"/>
<polygon points="1453.0,467.0 1473.0,469.0 1473.0,491.0 1450.0,488.0" fill="#f7f6f3" stroke="#d9d7d3" stroke-width="0.8"/>
<polygon points="1449.0,495.0 1473.0,497.0 1473.0,522.0 1448.0,519.0" fill="#f7f6f3" stroke="#d9d7d3" stroke-width="0.8"/>
<polygon points="1120.0,525.2 1222.6,522.7 1222.6,557.0 1120.0,560.7" fill="#f7f6f3" stroke="#d9d7d3" stroke-width="0.8"/>
<polygon points="1073.0,515.0 1080.6,515.0 1080.6,547.0 1073.0,547.0" fill="#f7f6f3" stroke="#d9d7d3" stroke-width="0.8"/>
<polygon points="1111.0,602.6 1202.3,600.0 1202.3,636.8 1111.0,639.3" fill="#f7f6f3" stroke="#d9d7d3" stroke-width="0.8"/>
<polygon points="1073.0,599.0 1082.0,599.0 1082.0,633.0 1073.0,633.0" fill="#f7f6f3" stroke="#d9d7d3" stroke-width="0.8"/>
<polygon points="1344.2,548.0 1392.4,548.0 1392.4,619.0 1344.2,619.0" fill="#f7f6f3" stroke="#d9d7d3" stroke-width="0.8"/>
<polygon points="1232.7,628.0 1388.6,639.0 1386.0,699.0 1233.0,692.0" fill="#f7f6f3" stroke="#d9d7d3" stroke-width="0.8"/>
<polygon points="1262.0,657.0 1300.0,658.5 1300.0,669.5 1262.0,668.5" fill="#e8e8e8"/>
<polygon points="1272.6,669.0 1292.0,669.5 1292.0,700.0 1272.6,700.0" fill="#e8e8e8"/>
<polygon points="1323.0,661.0 1361.0,662.0 1361.0,671.0 1323.0,670.5" fill="#e8e8e8"/>
<polygon points="1328.0,670.5 1346.0,671.0 1346.0,700.0 1328.0,700.0" fill="#e8e8e8"/>
<polygon points="1233.0,657.0 1243.0,657.5 1243.0,669.5 1233.0,669.0" fill="#e8e8e8"/>
<polygon points="1452.0,566.0 1473.0,566.0 1473.0,600.0 1452.0,600.0" fill="#f7f6f3" stroke="#d9d7d3" stroke-width="0.8"/>
<polygon points="1441.0,625.0 1473.0,622.0 1473.0,686.0 1441.0,686.0" fill="#f7f6f3" stroke="#d9d7d3" stroke-width="0.8"/>
<polygon points="1099.6,686.0 1192.0,686.0 1191.0,719.0 1099.6,719.0" fill="#f7f6f3" stroke="#d9d7d3" stroke-width="0.8"/>
<polygon points="1145.2,733.0 1311.3,738.0 1307.5,762.0 1161.7,743.0 1149.0,839.4 1127.5,835.6" fill="#f7f6f3" stroke="#d9d7d3" stroke-width="0.8"/>
<polygon points="1263.8,771.0 1285.4,777.4 1286.5,785.0 1309.3,791.5 1310.3,787.1 1324.4,789.3 1323.3,794.7 1335.3,795.8 1336.3,789.3 1364.5,794.7 1327.2,806.6 1321.2,805.5 1320.1,818.5 1312.5,818.5 1313.6,803.4 1307.1,801.2 1303.8,815.3 1271.4,808.8 1271.4,793.6 1263.8,789.3" fill="#f7f6f3" stroke="#d9d7d3" stroke-width="0.8"/>
<polygon points="1336.6,750.6 1368.3,755.7 1364.5,782.3 1330.3,776.0" fill="#f7f6f3" stroke="#d9d7d3" stroke-width="0.8"/>
<polygon points="1208.5,860.8 1308.2,882.0 1327.2,806.6 1364.5,794.7 1336.3,919.0 1296.3,919.0 1282.2,912.8 1281.1,899.8 1250.8,895.4 1249.7,908.4 1233.5,906.3 1233.5,890.0 1228.0,890.0 1224.8,903.0 1207.5,898.7 1208.5,886.8 1202.0,884.6" fill="#f7f6f3" stroke="#d9d7d3" stroke-width="0.8"/>
<polygon points="1429.0,686.0 1473.0,686.0 1473.0,705.0 1430.4,705.0" fill="#f7f6f3" stroke="#d9d7d3" stroke-width="0.8"/>
<polygon points="1414.0,724.0 1434.0,724.0 1434.0,734.0 1440.0,735.0 1440.0,762.0 1414.0,763.0" fill="#f7f6f3" stroke="#d9d7d3" stroke-width="0.8"/>
<polygon points="1397.5,797.5 1473.0,793.7 1473.0,824.0 1397.5,825.4" fill="#f7f6f3" stroke="#d9d7d3" stroke-width="0.8"/>
<polygon points="1395.0,848.0 1473.0,844.4 1473.0,880.0 1395.0,881.0" fill="#f7f6f3" stroke="#d9d7d3" stroke-width="0.8"/>
<polygon points="1392.4,886.0 1459.6,896.4 1457.0,925.0 1391.0,925.0" fill="#f7f6f3" stroke="#d9d7d3" stroke-width="0.8"/>
<polygon points="1073.0,733.0 1126.0,734.0 1123.7,755.7 1073.0,754.4" fill="#f7f6f3" stroke="#d9d7d3" stroke-width="0.8"/>
<polygon points="1073.0,764.6 1099.6,764.6 1098.3,785.0 1073.0,783.6" fill="#f7f6f3" stroke="#d9d7d3" stroke-width="0.8"/>
<g transform="translate(384.5,497.5)"><path d="M-2.6,8 L0,12.5 L2.6,8 Z" fill="#51b4d5"/><circle r="9" fill="#51b4d5" stroke="#fff" stroke-width="0.7" stroke-opacity="0.8"/><path d="M-5,-1 L0,-5 L5,-1 Z M-4,0 H4 V4 H-4 Z" fill="#fff"/></g>
<g transform="translate(355,628)"><path d="M-2.6,8 L0,12.5 L2.6,8 Z" fill="#51b4d5"/><circle r="9" fill="#51b4d5" stroke="#fff" stroke-width="0.7" stroke-opacity="0.8"/><path d="M0,5 V-0.5" stroke="#e6f4f8" stroke-width="1.3"/><path d="M0,-0.5 Q-0.5,-4.5 -4.5,-4.5 Q-4.5,-0.5 0,-0.5 Z M0.3,-0.8 Q1,-3.8 4.6,-3.6 Q4.2,-0.6 0.3,-0.8 Z" fill="#fff"/></g>
<g transform="translate(344,701)"><path d="M-2.6,8 L0,12.5 L2.6,8 Z" fill="#51b4d5"/><circle r="9" fill="#51b4d5" stroke="#fff" stroke-width="0.7" stroke-opacity="0.8"/><path d="M0,5 V-0.5" stroke="#e6f4f8" stroke-width="1.3"/><path d="M0,-0.5 Q-0.5,-4.5 -4.5,-4.5 Q-4.5,-0.5 0,-0.5 Z M0.3,-0.8 Q1,-3.8 4.6,-3.6 Q4.2,-0.6 0.3,-0.8 Z" fill="#fff"/></g>
<g transform="translate(540.4,754)"><path d="M-2.6,8 L0,12.5 L2.6,8 Z" fill="#51b4d5"/><circle r="9" fill="#51b4d5" stroke="#fff" stroke-width="0.7" stroke-opacity="0.8"/><path d="M0,5 V-0.5" stroke="#e6f4f8" stroke-width="1.3"/><path d="M0,-0.5 Q-0.5,-4.5 -4.5,-4.5 Q-4.5,-0.5 0,-0.5 Z M0.3,-0.8 Q1,-3.8 4.6,-3.6 Q4.2,-0.6 0.3,-0.8 Z" fill="#fff"/></g>
<g transform="translate(531.6,793.5)"><path d="M-2.6,8 L0,12.5 L2.6,8 Z" fill="#5b8ee6"/><circle r="9" fill="#5b8ee6" stroke="#fff" stroke-width="0.7" stroke-opacity="0.8"/><text x="0" y="4.5" font-size="13" font-weight="bold" fill="#fff" text-anchor="middle">P</text></g>
<g transform="translate(479,835)"><path d="M-2.6,8 L0,12.5 L2.6,8 Z" fill="#51b4d5"/><circle r="9" fill="#51b4d5" stroke="#fff" stroke-width="0.7" stroke-opacity="0.8"/><path d="M-5,-4 H5 V4 H-5 Z" fill="none" stroke="#fff" stroke-width="1.4"/><path d="M-3,-1 H3 V2 H-3Z" fill="#fff"/></g>
<g transform="translate(677,835.5)"><path d="M-2.6,8 L0,12.5 L2.6,8 Z" fill="#51b4d5"/><circle r="9" fill="#51b4d5" stroke="#fff" stroke-width="0.7" stroke-opacity="0.8"/><path d="M0,5 V-0.5" stroke="#e6f4f8" stroke-width="1.3"/><path d="M0,-0.5 Q-0.5,-4.5 -4.5,-4.5 Q-4.5,-0.5 0,-0.5 Z M0.3,-0.8 Q1,-3.8 4.6,-3.6 Q4.2,-0.6 0.3,-0.8 Z" fill="#fff"/></g>
<g transform="translate(782.8,544)"><path d="M-2.6,8 L0,12.5 L2.6,8 Z" fill="#51b4d5"/><circle r="9" fill="#51b4d5" stroke="#fff" stroke-width="0.7" stroke-opacity="0.8"/><text x="0" y="2.5" font-size="6" font-weight="bold" fill="#fff" text-anchor="middle">ATM</text></g>
<g transform="translate(899.9,545)"><path d="M-2.6,8 L0,12.5 L2.6,8 Z" fill="#f08552"/><circle r="9" fill="#f08552" stroke="#fff" stroke-width="0.7" stroke-opacity="0.8"/><path d="M-5,-0.5 H5 A5,4.5 0 0 1 -5,-0.5 Z M1,-2 L4,-6" fill="#fff" stroke="#fff" stroke-width="1.2"/></g>
<g transform="translate(693.3,653)"><path d="M-2.6,8 L0,12.5 L2.6,8 Z" fill="#5cb960"/><circle r="9" fill="#5cb960" stroke="#fff" stroke-width="0.7" stroke-opacity="0.8"/><path d="M-1.5,5 V-5 L-5,2 Z M1.5,5 V-3 L5,3 Z" fill="#fff"/></g>
<g transform="translate(713.6,697)"><path d="M-2.6,8 L0,12.5 L2.6,8 Z" fill="#5cb960"/><circle r="9" fill="#5cb960" stroke="#fff" stroke-width="0.7" stroke-opacity="0.8"/><path d="M-1.5,5 V-5 L-5,2 Z M1.5,5 V-3 L5,3 Z" fill="#fff"/></g>
<g transform="translate(805,805)"><path d="M-2.6,8 L0,12.5 L2.6,8 Z" fill="#51b4d5"/><circle r="9" fill="#51b4d5" stroke="#fff" stroke-width="0.7" stroke-opacity="0.8"/><path d="M0,5 V-0.5" stroke="#e6f4f8" stroke-width="1.3"/><path d="M0,-0.5 Q-0.5,-4.5 -4.5,-4.5 Q-4.5,-0.5 0,-0.5 Z M0.3,-0.8 Q1,-3.8 4.6,-3.6 Q4.2,-0.6 0.3,-0.8 Z" fill="#fff"/></g>
<g transform="translate(1067,648)"><path d="M-2.6,8 L0,12.5 L2.6,8 Z" fill="#51b4d5"/><circle r="9" fill="#51b4d5" stroke="#fff" stroke-width="0.7" stroke-opacity="0.8"/><path d="M-4,-4 H3 V4 H-4 Z M-1,0 H5 M3,-2 L5,0 L3,2" fill="none" stroke="#fff" stroke-width="1.6"/></g>
<g transform="translate(927.8,892)"><path d="M-2.6,8 L0,12.5 L2.6,8 Z" fill="#a774dd"/><circle r="9" fill="#a774dd" stroke="#fff" stroke-width="0.7" stroke-opacity="0.8"/><path d="M-4.2,-1.8 H4.2 L4.6,4.6 H-4.6 Z" fill="#fff"/><path d="M-2,-1.8 V-3 A2,2 0 0 1 2,-3 V-1.8" fill="none" stroke="#fff" stroke-width="1.1"/><path d="M-1.6,0.3 V1 M1.6,0.3 V1" stroke="#a774dd" stroke-width="0.9"/></g>
<g transform="translate(869,914)"><path d="M-2.6,8 L0,12.5 L2.6,8 Z" fill="#51b4d5"/><circle r="9" fill="#51b4d5" stroke="#fff" stroke-width="0.7" stroke-opacity="0.8"/></g>
<g transform="translate(862,731)"><path d="M-2.6,8 L0,12.5 L2.6,8 Z" fill="#51b4d5"/><circle r="9" fill="#51b4d5" stroke="#fff" stroke-width="0.7" stroke-opacity="0.8"/><path d="M0,5 V-0.5" stroke="#e6f4f8" stroke-width="1.3"/><path d="M0,-0.5 Q-0.5,-4.5 -4.5,-4.5 Q-4.5,-0.5 0,-0.5 Z M0.3,-0.8 Q1,-3.8 4.6,-3.6 Q4.2,-0.6 0.3,-0.8 Z" fill="#fff"/></g>
<g transform="translate(866,663)"><path d="M-2.6,8 L0,12.5 L2.6,8 Z" fill="#51b4d5"/><circle r="9" fill="#51b4d5" stroke="#fff" stroke-width="0.7" stroke-opacity="0.8"/><path d="M0,5 V-0.5" stroke="#e6f4f8" stroke-width="1.3"/><path d="M0,-0.5 Q-0.5,-4.5 -4.5,-4.5 Q-4.5,-0.5 0,-0.5 Z M0.3,-0.8 Q1,-3.8 4.6,-3.6 Q4.2,-0.6 0.3,-0.8 Z" fill="#fff"/></g>
<g transform="translate(1393,488)"><path d="M-2.6,8 L0,12.5 L2.6,8 Z" fill="#51b4d5"/><circle r="9" fill="#51b4d5" stroke="#fff" stroke-width="0.7" stroke-opacity="0.8"/><path d="M-5,-1 L0,-5 L5,-1 Z M-4,0 H4 V4 H-4 Z" fill="#fff"/></g>
<g transform="translate(1369.6,568)"><path d="M-2.6,8 L0,12.5 L2.6,8 Z" fill="#51b4d5"/><circle r="9" fill="#51b4d5" stroke="#fff" stroke-width="0.7" stroke-opacity="0.8"/><path d="M-4,3 L3,-4" stroke="#fff" stroke-width="5" stroke-linecap="round"/></g>
<g transform="translate(1388,606)"><path d="M-2.6,8 L0,12.5 L2.6,8 Z" fill="#a774dd"/><circle r="9" fill="#a774dd" stroke="#fff" stroke-width="0.7" stroke-opacity="0.8"/><path d="M-4.2,-1.8 H4.2 L4.6,4.6 H-4.6 Z" fill="#fff"/><path d="M-2,-1.8 V-3 A2,2 0 0 1 2,-3 V-1.8" fill="none" stroke="#fff" stroke-width="1.1"/><path d="M-1.6,0.3 V1 M1.6,0.3 V1" stroke="#a774dd" stroke-width="0.9"/></g>
<g transform="translate(1386,663)"><path d="M-2.6,8 L0,12.5 L2.6,8 Z" fill="#a774dd"/><circle r="9" fill="#a774dd" stroke="#fff" stroke-width="0.7" stroke-opacity="0.8"/><path d="M-4.2,-1.8 H4.2 L4.6,4.6 H-4.6 Z" fill="#fff"/><path d="M-2,-1.8 V-3 A2,2 0 0 1 2,-3 V-1.8" fill="none" stroke="#fff" stroke-width="1.1"/><path d="M-1.6,0.3 V1 M1.6,0.3 V1" stroke="#a774dd" stroke-width="0.9"/></g>
<g transform="translate(1357,711)"><path d="M-2.6,8 L0,12.5 L2.6,8 Z" fill="#51b4d5"/><circle r="9" fill="#51b4d5" stroke="#fff" stroke-width="0.7" stroke-opacity="0.8"/><path d="M-4,-4 H3 V4 H-4 Z M-1,0 H5 M3,-2 L5,0 L3,2" fill="none" stroke="#fff" stroke-width="1.6"/></g>
<g transform="translate(1384,724)"><path d="M-2.6,8 L0,12.5 L2.6,8 Z" fill="#5b8ee6"/><circle r="9" fill="#5b8ee6" stroke="#fff" stroke-width="0.7" stroke-opacity="0.8"/><text x="0" y="4.5" font-size="13" font-weight="bold" fill="#fff" text-anchor="middle">P</text></g>
<g transform="translate(1322,739.5)"><path d="M-2.6,8 L0,12.5 L2.6,8 Z" fill="#5b8ee6"/><circle r="9" fill="#5b8ee6" stroke="#fff" stroke-width="0.7" stroke-opacity="0.8"/><text x="0" y="4.5" font-size="13" font-weight="bold" fill="#fff" text-anchor="middle">P</text></g>
<g transform="translate(1359,774.5)"><path d="M-2.6,8 L0,12.5 L2.6,8 Z" fill="#a774dd"/><circle r="9" fill="#a774dd" stroke="#fff" stroke-width="0.7" stroke-opacity="0.8"/><path d="M-4.2,-1.8 H4.2 L4.6,4.6 H-4.6 Z" fill="#fff"/><path d="M-2,-1.8 V-3 A2,2 0 0 1 2,-3 V-1.8" fill="none" stroke="#fff" stroke-width="1.1"/><path d="M-1.6,0.3 V1 M1.6,0.3 V1" stroke="#a774dd" stroke-width="0.9"/></g>
<g transform="translate(1337,818)"><path d="M-2.6,8 L0,12.5 L2.6,8 Z" fill="#a774dd"/><circle r="9" fill="#a774dd" stroke="#fff" stroke-width="0.7" stroke-opacity="0.8"/><path d="M-5,-1 H5 L4,4 H-4 Z M-3,-1 V-4 M0,-1 V-4 M3,-1 V-4" fill="#fff" stroke="#fff" stroke-width="1"/></g>
<g transform="translate(1335,875)"><path d="M-2.6,8 L0,12.5 L2.6,8 Z" fill="#e24f5f"/><circle r="9" fill="#e24f5f" stroke="#fff" stroke-width="0.7" stroke-opacity="0.8"/><path d="M0,-5.5 L1.6,-1.8 L5.5,-1.6 L2.5,1 L3.4,5 L0,2.8 L-3.4,5 L-2.5,1 L-5.5,-1.6 L-1.6,-1.8 Z" fill="#fff"/></g>
<text x="418.8" y="467" font-size="12" fill="#4a4a4a" text-anchor="middle" stroke="#fff" stroke-width="2.5" paint-order="stroke" stroke-linejoin="round">学生一食堂</text>
<text x="273" y="491" font-size="12" fill="#333" stroke="#fff" stroke-width="2.5" paint-order="stroke" stroke-linejoin="round">人专属</text>
<text x="271" y="505" font-size="12" fill="#333" stroke="#fff" stroke-width="2.5" paint-order="stroke" stroke-linejoin="round">馆</text>
<text x="384.5" y="522" font-size="12" fill="#4a4a4a" text-anchor="middle" stroke="#fff" stroke-width="2.5" paint-order="stroke" stroke-linejoin="round">中南财经政法大学</text>
<text x="384.5" y="535" font-size="12" fill="#4a4a4a" text-anchor="middle" stroke="#fff" stroke-width="2.5" paint-order="stroke" stroke-linejoin="round">首义校区-首义会堂</text>
<text x="355.4" y="654" font-size="12" fill="#4a4a4a" text-anchor="middle" stroke="#fff" stroke-width="2.5" paint-order="stroke" stroke-linejoin="round">26号楼</text>
<text x="344" y="727" font-size="12" fill="#4a4a4a" text-anchor="middle" stroke="#fff" stroke-width="2.5" paint-order="stroke" stroke-linejoin="round">27号楼</text>
<text x="273" y="726" font-size="12" fill="#333" stroke="#fff" stroke-width="2.5" paint-order="stroke" stroke-linejoin="round">首义</text>
<text x="273" y="739" font-size="12" fill="#333" stroke="#fff" stroke-width="2.5" paint-order="stroke" stroke-linejoin="round">所</text>
<text x="540.4" y="780" font-size="12" fill="#4a4a4a" text-anchor="middle" stroke="#fff" stroke-width="2.5" paint-order="stroke" stroke-linejoin="round">电教楼</text>
<text x="479.6" y="857" font-size="12" fill="#4a4a4a" text-anchor="middle" stroke="#fff" stroke-width="2.5" paint-order="stroke" stroke-linejoin="round">中南财经政法大学</text>
<text x="479.6" y="871" font-size="12" fill="#4a4a4a" text-anchor="middle" stroke="#fff" stroke-width="2.5" paint-order="stroke" stroke-linejoin="round">首义校区篮球场</text>
<text x="677" y="863" font-size="12" fill="#4a4a4a" text-anchor="middle" stroke="#fff" stroke-width="2.5" paint-order="stroke" stroke-linejoin="round">29号楼</text>
<text x="625" y="545" font-size="14" fill="#5ba6c0" text-anchor="middle" stroke="#fff" stroke-width="2.5" paint-order="stroke" stroke-linejoin="round">中南财经政法大学</text>
<text x="625" y="561" font-size="14" fill="#5ba6c0" text-anchor="middle" stroke="#fff" stroke-width="2.5" paint-order="stroke" stroke-linejoin="round">(首义校区)</text>
<text x="899.9" y="568" font-size="12" fill="#4a4a4a" text-anchor="middle" stroke="#fff" stroke-width="2.5" paint-order="stroke" stroke-linejoin="round">中南财经政法大学</text>
<text x="899.9" y="581" font-size="12" fill="#4a4a4a" text-anchor="middle" stroke="#fff" stroke-width="2.5" paint-order="stroke" stroke-linejoin="round">第二食堂</text>
<text x="750" y="653" font-size="12" fill="#3aa04a" text-anchor="middle" stroke="#fff" stroke-width="2.5" paint-order="stroke" stroke-linejoin="round">中南财经政法大学</text>
<text x="750" y="666" font-size="12" fill="#3aa04a" text-anchor="middle" stroke="#fff" stroke-width="2.5" paint-order="stroke" stroke-linejoin="round">首义校区-陈毅塑像</text>
<text x="691" y="703" font-size="12" fill="#3aa04a" text-anchor="middle" stroke="#fff" stroke-width="2.5" paint-order="stroke" stroke-linejoin="round">思园</text>
<text x="863" y="757" font-size="12" fill="#4a4a4a" text-anchor="middle" stroke="#fff" stroke-width="2.5" paint-order="stroke" stroke-linejoin="round">39号楼</text>
<text x="858" y="686" font-size="12" fill="#4a4a4a" text-anchor="middle" stroke="#fff" stroke-width="2.5" paint-order="stroke" stroke-linejoin="round">54号楼</text>
<text x="862" y="805" font-size="12" fill="#4a4a4a" text-anchor="middle" stroke="#fff" stroke-width="2.5" paint-order="stroke" stroke-linejoin="round">中南财经政法大学</text>
<text x="862" y="818" font-size="12" fill="#4a4a4a" text-anchor="middle" stroke="#fff" stroke-width="2.5" paint-order="stroke" stroke-linejoin="round">首义校区-33号楼</text>
<text x="1068" y="672" font-size="12" fill="#4a4a4a" text-anchor="middle" stroke="#fff" stroke-width="2.5" paint-order="stroke" stroke-linejoin="round">中南财经政法大学</text>
<text x="1068" y="685" font-size="12" fill="#4a4a4a" text-anchor="middle" stroke="#fff" stroke-width="2.5" paint-order="stroke" stroke-linejoin="round">首义校区-东2门</text>
<text x="960" y="897" font-size="12" fill="#333" text-anchor="middle" stroke="#fff" stroke-width="2.5" paint-order="stroke" stroke-linejoin="round">海阳冻品</text>
<text x="1325" y="488" font-size="12" fill="#4a4a4a" text-anchor="middle" stroke="#fff" stroke-width="2.5" paint-order="stroke" stroke-linejoin="round">华中师大一附中武昌</text>
<text x="1338" y="501" font-size="12" fill="#4a4a4a" text-anchor="middle" stroke="#fff" stroke-width="2.5" paint-order="stroke" stroke-linejoin="round">校区家属区(南)</text>
<text x="1366" y="537" font-size="12" fill="#888" text-anchor="middle" stroke="#fff" stroke-width="2.5" paint-order="stroke" stroke-linejoin="round">2号楼</text>
<text x="1410" y="574" font-size="12" fill="#4a4a4a" text-anchor="middle" stroke="#fff" stroke-width="2.5" paint-order="stroke" stroke-linejoin="round">智仁大药房</text>
<text x="1421" y="612" font-size="12" fill="#4a4a4a" text-anchor="middle" stroke="#fff" stroke-width="2.5" paint-order="stroke" stroke-linejoin="round">兴隆厨具</text>
<text x="1320" y="631" font-size="14" fill="#888" text-anchor="middle" stroke="#fff" stroke-width="2.5" paint-order="stroke" stroke-linejoin="round">育才嘉苑</text>
<text x="1310" y="672" font-size="12" fill="#888" text-anchor="middle" stroke="#fff" stroke-width="2.5" paint-order="stroke" stroke-linejoin="round">8号</text>
<text x="1396" y="663" font-size="12" fill="#333" stroke="#fff" stroke-width="2.5" paint-order="stroke" stroke-linejoin="round">李超塑料袋一次</text>
<text x="1420" y="676" font-size="12" fill="#4a4a4a" text-anchor="middle" stroke="#fff" stroke-width="2.5" paint-order="stroke" stroke-linejoin="round">餐具批发</text>
<text x="1452" y="598" font-size="12" fill="#333" stroke="#fff" stroke-width="2.5" paint-order="stroke" stroke-linejoin="round">首义</text>
<text x="1358" y="737" font-size="12" fill="#4a4a4a" text-anchor="middle" stroke="#fff" stroke-width="2.5" paint-order="stroke" stroke-linejoin="round">南门</text>
<text x="1440" y="737" font-size="12" fill="#888" stroke="#fff" stroke-width="2.5" paint-order="stroke" stroke-linejoin="round">千家街</text>
<text x="1457" y="764" font-size="12" fill="#333" stroke="#fff" stroke-width="2.5" paint-order="stroke" stroke-linejoin="round">金旅</text>
<text x="1405" y="782" font-size="12" fill="#4a4a4a" text-anchor="middle" stroke="#fff" stroke-width="2.5" paint-order="stroke" stroke-linejoin="round">邓玲保洁劳保</text>
<text x="1371" y="823" font-size="12" fill="#4a4a4a" text-anchor="middle" stroke="#fff" stroke-width="2.5" paint-order="stroke" stroke-linejoin="round">中百超市</text>
<text x="1335" y="901" font-size="12" fill="#4a4a4a" text-anchor="middle" stroke="#fff" stroke-width="2.5" paint-order="stroke" stroke-linejoin="round">千家街社区</text>
<polyline points="874,664 873.3,686 868.2,741" fill="none" stroke="#1fc25a" stroke-width="4"/>
<path d="M861,677 L884,677 L873,703 Z" fill="#e4141c"/>
<circle cx="867" cy="739" r="10" fill="#d8191c"/>
<path d="M862,744 A6,6 0 1 1 874,744 L868,752 Z" fill="#2a8ee8"/><circle cx="868" cy="742" r="2" fill="#d8191c"/>
<rect x="794.7" y="587.3" width="159.7" height="79.9" rx="8" fill="#fff" stroke="#cfcfcf" stroke-width="1"/>
<path d="M870,592 H930 V622 H878 Q870,622 870,614 Z" fill="#fafafa"/>
<rect x="870" y="585" width="15" height="7" fill="#e9e9e7"/><rect x="885" y="585" width="45" height="7" fill="#dce3e9"/>
<rect x="870" y="592" width="15" height="15" fill="#e0e0e0"/><rect x="885" y="592" width="15" height="15" fill="#c9c9c9"/><rect x="900" y="592" width="15" height="15" fill="#c6c6c6"/><rect x="915" y="592" width="15" height="15" fill="#f9f9f9"/>
<rect x="870" y="607" width="15" height="15" fill="#f1f1f1"/><rect x="885" y="607" width="15" height="15" fill="#e1e1e1"/><rect x="900" y="607" width="15" height="15" fill="#dcdcdc"/><rect x="915" y="607" width="15" height="15" fill="#fafafa"/>
<rect x="885" y="622" width="30" height="4" fill="#d6d6d6"/>
<text x="801" y="610" font-size="13" fill="#222" text-anchor="start" >姓名：</text>
<text x="801" y="633" font-size="13" fill="#222" text-anchor="start" >状态：</text>
<text x="883" y="633" font-size="13" fill="#222" text-anchor="start" >上网</text>
<text x="801" y="656" font-size="13" fill="#222" text-anchor="start" >地址：</text>
<text x="845" y="656" font-size="13" fill="#222" text-anchor="start" >首义54栋-3f-301</text>

</g></svg>
</body></html>
